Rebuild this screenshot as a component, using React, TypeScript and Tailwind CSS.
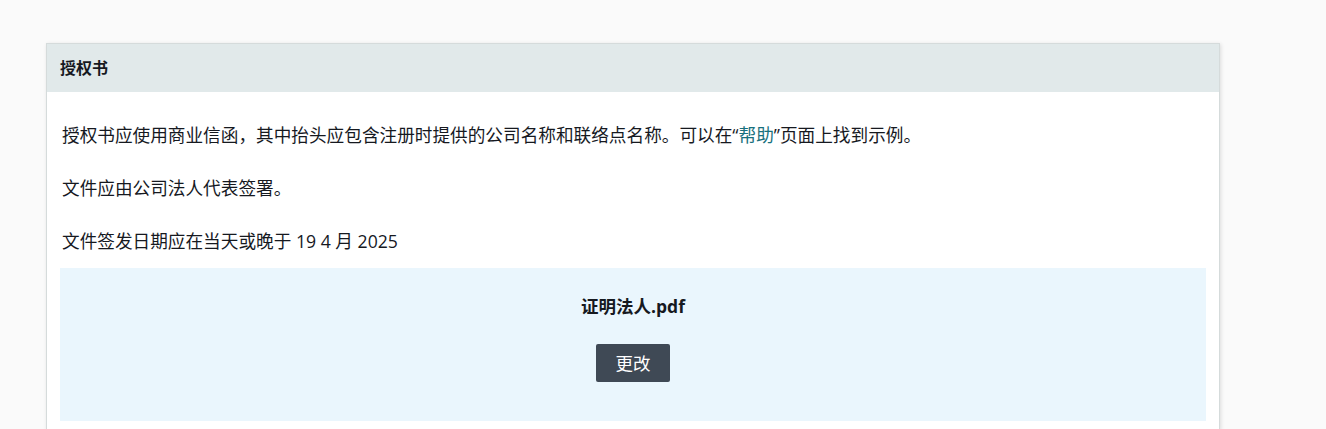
import React from "react";

export default function App() {
  const font = { fontFamily: '"Open Sans", "Noto Sans CJK SC", sans-serif' };
  return (
    <div className="min-h-screen bg-[#fafafa] pt-[43px] pl-[46px]" style={font}>
      <div className="w-[1174px] border border-[#d5dbdb] bg-white shadow-[1px_1px_4px_rgba(0,0,0,0.12)]">
        <div className="flex h-[48px] items-center bg-[#e1e9ea] px-[13px] text-[16px] font-bold text-[#16191f]">
          授权书
        </div>
        <div className="px-[13px] pt-[30px] pb-[8px] text-[#16191f]">
          <p className="mb-[27px] pl-[2px] text-[17.65px] leading-[26px]">
            授权书应使用商业信函，其中抬头应包含注册时提供的公司名称和联络点名称。可以在“<span className="text-[#18707d]">帮助</span>”页面上找到示例。
          </p>
          <p className="mb-[27px] pl-[2px] text-[17.65px] leading-[26px]">文件应由公司法人代表签署。</p>
          <p className="pl-[2px] text-[17.65px] leading-[26px]">文件签发日期应在当天或晚于 19 4 月 2025</p>
          <div className="mt-[14px] flex h-[153px] flex-col items-center bg-[#eaf6fd] pt-[25px]">
            <div className="text-[17.5px] font-bold leading-[26px] text-[#16191f]">证明法人.pdf</div>
            <button className="mt-[25px] flex h-[38px] w-[74px] items-center justify-center rounded-[2px] bg-[#3f4955] text-[17.5px] text-white">
              更改
            </button>
          </div>
        </div>
      </div>
    </div>
  );
}
